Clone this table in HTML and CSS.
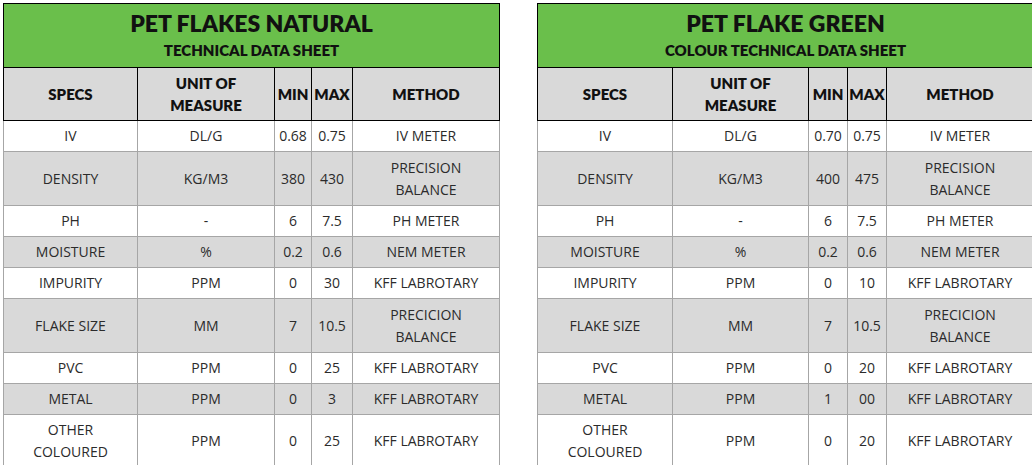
FILE: index.html
```html
<!DOCTYPE html>
<html>
<head>
<meta charset="utf-8">
<link rel="stylesheet" href="styles.css">
</head>
<body>
<div class="sheets">
  <table class="sheet sheet-left">
    <colgroup>
      <col class="c-spec-l"><col class="c-unit-l"><col class="c-min-l"><col class="c-max-l"><col class="c-method">
    </colgroup>
    <thead>
      <tr class="title-row">
        <th colspan="5"><div class="title">PET FLAKES NATURAL</div><div class="subtitle">TECHNICAL DATA SHEET</div></th>
      </tr>
      <tr class="head-row">
        <th>SPECS</th><th>UNIT OF<br>MEASURE</th><th>MIN</th><th>MAX</th><th>METHOD</th>
      </tr>
    </thead>
    <tbody>
      <tr class="r"><td>IV</td><td>DL/G</td><td>0.68</td><td>0.75</td><td>IV METER</td></tr>
      <tr class="r tall alt"><td>DENSITY</td><td>KG/M3</td><td>380</td><td>430</td><td>PRECISION<br>BALANCE</td></tr>
      <tr class="r"><td>PH</td><td>-</td><td>6</td><td>7.5</td><td>PH METER</td></tr>
      <tr class="r alt"><td>MOISTURE</td><td>%</td><td>0.2</td><td>0.6</td><td>NEM METER</td></tr>
      <tr class="r"><td>IMPURITY</td><td>PPM</td><td>0</td><td>30</td><td>KFF LABROTARY</td></tr>
      <tr class="r tall alt"><td>FLAKE SIZE</td><td>MM</td><td>7</td><td>10.5</td><td>PRECICION<br>BALANCE</td></tr>
      <tr class="r"><td>PVC</td><td>PPM</td><td>0</td><td>25</td><td>KFF LABROTARY</td></tr>
      <tr class="r alt"><td>METAL</td><td>PPM</td><td>0</td><td>3</td><td>KFF LABROTARY</td></tr>
      <tr class="r last"><td>OTHER<br>COLOURED</td><td>PPM</td><td>0</td><td>25</td><td>KFF LABROTARY</td></tr>
    </tbody>
  </table>

  <table class="sheet sheet-right">
    <colgroup>
      <col class="c-spec-r"><col class="c-unit-r"><col class="c-min-r"><col class="c-max-r"><col class="c-method">
    </colgroup>
    <thead>
      <tr class="title-row">
        <th colspan="5"><div class="title">PET FLAKE GREEN</div><div class="subtitle">COLOUR TECHNICAL DATA SHEET</div></th>
      </tr>
      <tr class="head-row">
        <th>SPECS</th><th>UNIT OF<br>MEASURE</th><th>MIN</th><th>MAX</th><th>METHOD</th>
      </tr>
    </thead>
    <tbody>
      <tr class="r"><td>IV</td><td>DL/G</td><td>0.70</td><td>0.75</td><td>IV METER</td></tr>
      <tr class="r tall alt"><td>DENSITY</td><td>KG/M3</td><td>400</td><td>475</td><td>PRECISION<br>BALANCE</td></tr>
      <tr class="r"><td>PH</td><td>-</td><td>6</td><td>7.5</td><td>PH METER</td></tr>
      <tr class="r alt"><td>MOISTURE</td><td>%</td><td>0.2</td><td>0.6</td><td>NEM METER</td></tr>
      <tr class="r"><td>IMPURITY</td><td>PPM</td><td>0</td><td>10</td><td>KFF LABROTARY</td></tr>
      <tr class="r tall alt"><td>FLAKE SIZE</td><td>MM</td><td>7</td><td>10.5</td><td>PRECICION<br>BALANCE</td></tr>
      <tr class="r"><td>PVC</td><td>PPM</td><td>0</td><td>20</td><td>KFF LABROTARY</td></tr>
      <tr class="r alt"><td>METAL</td><td>PPM</td><td>1</td><td>00</td><td>KFF LABROTARY</td></tr>
      <tr class="r last"><td>OTHER<br>COLOURED</td><td>PPM</td><td>0</td><td>20</td><td>KFF LABROTARY</td></tr>
    </tbody>
  </table>
</div>
</body>
</html>
```

FILE: styles.css
```css
html, body {
  margin: 0;
  padding: 0;
  background: #ffffff;
  overflow: hidden;
}
body {
  padding: 3px 0 0 3px;
  font-family: "Open Sans", "Liberation Sans", sans-serif;
}
.sheets {
  display: flex;
  gap: 37px;
  align-items: flex-start;
}
.sheet {
  border-collapse: collapse;
  table-layout: fixed;
  flex: none;
}
.sheet-left { width: 497px; }
.sheet-right { width: 497px; }
.c-spec-l { width: 134px; }
.c-unit-l { width: 137px; }
.c-min-l { width: 37px; }
.c-max-l { width: 41px; }
.c-spec-r { width: 135px; }
.c-unit-r { width: 136px; }
.c-min-r { width: 39px; }
.c-max-r { width: 39px; }
.c-method { width: 147px; }

.title-row th {
  background: #6abf4b;
  border: 1px solid #000;
  height: 63px;
  padding: 0;
  text-align: center;
  vertical-align: middle;
  font-family: Lato, "Open Sans", sans-serif;
  color: #111;
}
.title {
  font-size: 23px;
  font-weight: 800;
  line-height: 28px;
  margin-top: -2px;
}
.subtitle {
  font-size: 15px;
  font-weight: 800;
  line-height: 22px;
  margin-top: 2px;
}
.head-row th {
  background: #d9d9d9;
  border: 1px solid #000;
  height: 52px;
  padding: 0;
  font-family: Lato, "Open Sans", sans-serif;
  font-weight: 800;
  font-size: 15px;
  line-height: 22px;
  color: #111;
  text-align: center;
  vertical-align: middle;
}
.r td {
  border: 1px solid #a6a6a6;
  height: 30px;
  padding: 0;
  text-align: center;
  vertical-align: middle;
  font-size: 14px;
  line-height: 22px;
  color: #2b2b2b;
  white-space: nowrap;
}
.r.tall td { height: 53px; }
.r.last td { height: 51px; }
.r.alt td { background: #d9d9d9; }
.head-row + tr td { border-top-color: #000; }
```
